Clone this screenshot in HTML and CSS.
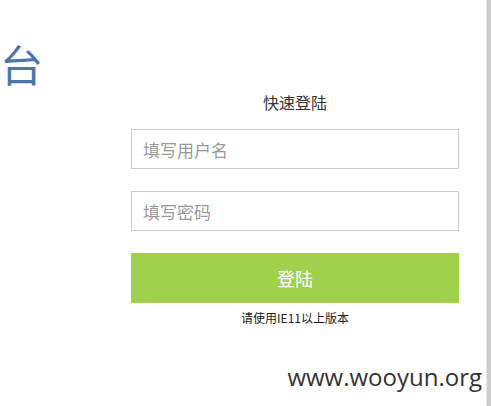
FILE: index.html
```html
<!DOCTYPE html>
<html lang="zh-CN">
<head>
<meta charset="utf-8">
<title>登录</title>
<link rel="stylesheet" href="styles.css">
</head>
<body>
<div class="page">
  <main class="main">
    <div class="brand">台</div>
    <div class="login">
      <div class="login-title">快速登陆</div>
      <input class="field" type="text" placeholder="填写用户名">
      <input class="field" type="password" placeholder="填写密码">
      <button class="submit" type="button">登陆</button>
      <div class="note">请使用IE11以上版本</div>
    </div>
    <div class="watermark">www.wooyun.org</div>
  </main>
  <div class="scroll-strip"></div>
</div>
</body>
</html>
```

FILE: styles.css
```css
* { box-sizing: border-box; }
html, body {
  margin: 0;
  padding: 0;
  height: 100%;
  background: #fff;
}
body {
  font-family: "Noto Sans CJK SC", "Noto Sans", sans-serif;
  color: #333;
}
.page {
  display: flex;
  height: 406px;
  overflow: hidden;
}
.main {
  flex: 1;
  position: relative;
  padding-top: 36px;
}
.brand {
  font-family: "Noto Sans CJK SC", serif;
  font-size: 43px;
  line-height: 54px;
  color: #4f76aa;
  margin-left: 0;
  height: 56px;
}
.login {
  width: 328px;
  margin-left: 131px;
  display: flex;
  flex-direction: column;
}
.login-title {
  text-align: center;
  font-size: 16px;
  line-height: 20px;
  color: #333;
  height: 37px;
}
.field {
  display: block;
  width: 328px;
  height: 40px;
  border: 1px solid #cccccc;
  padding: 0 11px;
  font-family: "Noto Sans CJK SC", sans-serif;
  font-size: 17px;
  color: #333;
  outline: none;
  margin: 0 0 22px 0;
  background: #fff;
}
.field::placeholder { color: #999; }
.submit {
  display: block;
  width: 328px;
  height: 50px;
  border: 0;
  margin: 0;
  background: #a1d04c;
  color: #fff;
  font-family: "Noto Sans CJK SC", sans-serif;
  font-size: 18px;
}
.note {
  text-align: center;
  font-size: 12px;
  line-height: 16px;
  margin-top: 7px;
  color: #222;
}
.watermark {
  position: absolute;
  right: 4px;
  top: 360px;
  font-family: "Open Sans", sans-serif;
  font-size: 24px;
  line-height: 34px;
  color: #333;
}
.scroll-strip {
  width: 5px;
  flex: none;
  background: #cdcdcd;
  border-left: 1px solid #e6e6e6;
}
```
